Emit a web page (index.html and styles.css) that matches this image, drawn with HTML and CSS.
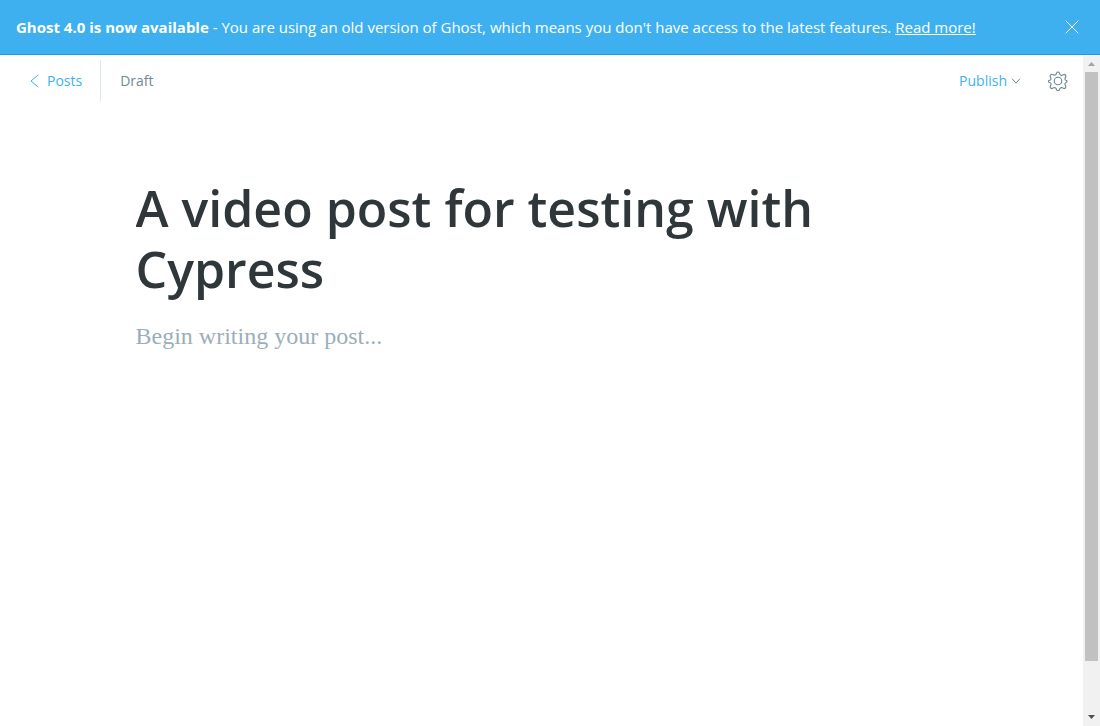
FILE: index.html
```html
<!DOCTYPE html>
<html lang="en">
<head>
<meta charset="utf-8">
<title>Editor - Ghost</title>
<link rel="stylesheet" href="styles.css">
</head>
<body>
<aside class="upgrade-bar">
  <p class="upgrade-text"><strong>Ghost 4.0 is now available</strong> - You are using an old version of Ghost, which means you don't have access to the latest features. <a class="upgrade-link" href="#">Read more!</a></p>
  <button class="icon-button" type="button" aria-label="Close">
    <svg class="close-icon" viewBox="0 0 14 14"><path d="M.7.7l12.6 12.6M13.3.7L.7 13.3"/></svg>
  </button>
</aside>
<div class="viewport">
  <div class="editor">
    <header class="toolbar">
      <a class="back-link" href="#"><svg class="back-icon" viewBox="0 0 9 14"><path d="M8.3.8L1 7l7.3 6.2"/></svg>Posts</a>
      <span class="status">Draft</span>
      <button class="publish" type="button">Publish<svg class="caret-icon" viewBox="0 0 10 6"><path d="M1 .7l4 4.4L9 .7"/></svg></button>
      <button class="icon-button" type="button" aria-label="Settings">
        <svg class="gear-icon" viewBox="0 0 24 24"><circle cx="12" cy="12" r="4.5"/><path d="M13.7 2.4l.5 1.4a2.1 2.1 0 0 0 2.9 1.2l1.3-.6a2.1 2.1 0 0 1 2.8 2.8l-.6 1.3a2.1 2.1 0 0 0 1.2 2.9l.4.1a1.1 1.1 0 0 1 0 2l-.4.3a2.1 2.1 0 0 0-1.2 2.9l.6 1.3a2.1 2.1 0 0 1-2.8 2.8l-1.3-.6a2.1 2.1 0 0 0-2.9 1.2l-.5 1.1a1.8 1.8 0 0 1-3.4 0l-.5-1.1a2.1 2.1 0 0 0-2.9-1.2l-1.3.6a2.1 2.1 0 0 1-2.8-2.8l.6-1.3a2.1 2.1 0 0 0-1.2-2.9l-1-.4a1.1 1.1 0 0 1 0-2l1-.3a2.1 2.1 0 0 0 1.2-2.8l-.6-1.3a2.1 2.1 0 0 1 2.8-2.8l1.3.6a2.1 2.1 0 0 0 2.9-1.2l.5-1.2a1.8 1.8 0 0 1 3.4 0z"/></svg>
      </button>
    </header>
    <main class="post">
      <textarea class="post-title" rows="2" aria-label="Post title" spellcheck="false">A video post for testing with Cypress</textarea>
      <textarea class="post-body" rows="2" aria-label="Post content" placeholder="Begin writing your post..."></textarea>
    </main>
  </div>
  <div class="scrollbar" aria-hidden="true">
    <svg class="arrow arrow-up" viewBox="0 0 17 17"><path d="M5 11h7L8.5 7z"/></svg>
    <div class="track"><div class="thumb"></div></div>
    <svg class="arrow arrow-down" viewBox="0 0 17 17"><path d="M5 6h7l-3.5 4z"/></svg>
  </div>
</div>
</body>
</html>
```
FILE: styles.css
```css
* {
  box-sizing: border-box;
}

body {
  display: flex;
  flex-direction: column;
  height: 100vh;
  margin: 0;
  background: #fff;
  color: #2f373b;
  font-family: "Segoe UI", "Open Sans", sans-serif;
}

button {
  padding: 0;
  border: 0;
  background: none;
  font-family: inherit;
  cursor: pointer;
}

svg {
  display: block;
  flex: none;
  fill: none;
}

.upgrade-bar {
  display: flex;
  align-items: center;
  justify-content: space-between;
  gap: 16px;
  padding: 16px 21px 16px 16px;
  border-bottom: 1px solid #1a9be8;
  background: #3eb0ef;
  color: #fff;
}

.upgrade-text {
  margin: 0;
  font-size: 15px;
  line-height: 22px;
}

.upgrade-link {
  color: inherit;
}

.icon-button {
  display: flex;
}

.close-icon {
  width: 14px;
  height: 14px;
  stroke: #fff;
}

.viewport {
  display: flex;
  flex: 1;
  min-height: 0;
}

.editor {
  flex: 1;
  min-width: 0;
  overflow: hidden;
}

.toolbar {
  display: flex;
  align-items: center;
  padding: 5px 15px 6px 30px;
  font-size: 14px;
  line-height: 20px;
}

.back-link {
  display: flex;
  align-items: center;
  gap: 8px;
  padding: 11px 18px 11px 0;
  border-right: 1px solid #dfe9f3;
  color: #3eb0ef;
  text-decoration: none;
}

.back-icon {
  width: 9px;
  height: 14px;
  stroke: #3eb0ef;
}

.status {
  margin-left: 19px;
  color: #738a94;
}

.publish {
  display: flex;
  align-items: center;
  gap: 4px;
  margin: 0 27px 0 auto;
  color: #3eb0ef;
  font-size: 14px;
  line-height: 20px;
}

.caret-icon {
  width: 10px;
  height: 6px;
  stroke: #738a94;
}

.gear-icon {
  width: 20px;
  height: 20px;
  stroke: #738a94;
  stroke-width: 1.4;
}

.post {
  display: flex;
  flex-direction: column;
  max-width: 820px;
  margin: 0 auto;
  padding: 70px 4px 0;
}

.post-title,
.post-body {
  display: block;
  width: 100%;
  border: 0;
  outline: 0;
  background: none;
  resize: none;
  overflow: hidden;
}

.post-title {
  height: 140px;
  padding: 0 0 18px;
  color: #2f373b;
  font-family: inherit;
  font-size: 50px;
  font-weight: 600;
  line-height: 61px;
}

.post-body {
  padding: 0;
  font-family: Georgia, "Liberation Serif", serif;
  font-size: 24px;
  line-height: 36px;
}

.post-body::placeholder {
  color: #9baeb8;
  opacity: 1;
}

.scrollbar {
  display: flex;
  flex-direction: column;
  width: 17px;
  background: #f1f1f1;
}

.arrow {
  width: 17px;
  height: 17px;
}

.arrow-up {
  fill: #a3a3a3;
}

.arrow-down {
  fill: #505050;
}

.track {
  flex: 1;
  padding: 0 2px;
}

.thumb {
  height: 92.5%;
  background: #c1c1c1;
}
```
